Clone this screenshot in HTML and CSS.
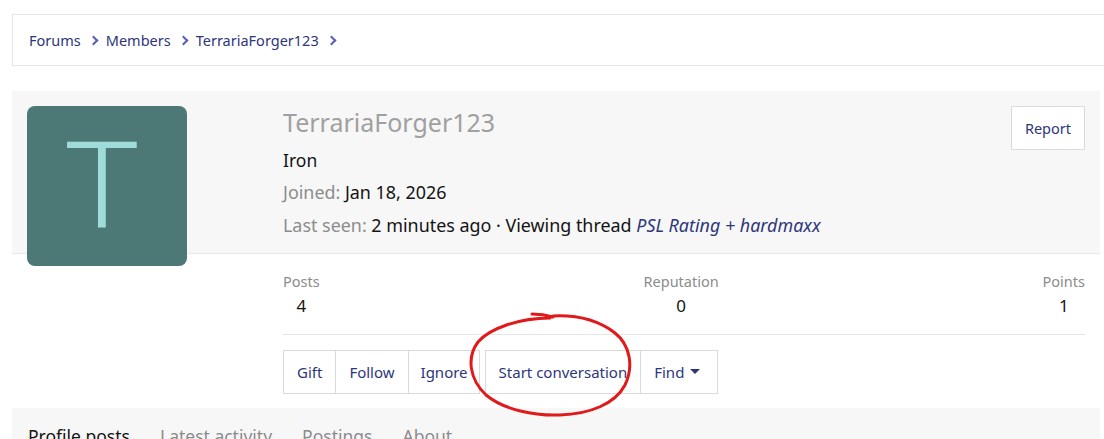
FILE: index.html
```html
<!DOCTYPE html>
<html lang="en">
<head>
<meta charset="utf-8">
<title>TerrariaForger123 | Members</title>
<link rel="stylesheet" href="styles.css">
</head>
<body>
<div class="page">
  <nav class="crumbs">
    <a class="crumb" href="#">Forums</a><span class="chev"></span>
    <a class="crumb" href="#">Members</a><span class="chev"></span>
    <a class="crumb" href="#">TerrariaForger123</a><span class="chev"></span>
  </nav>

  <section class="profile">
    <div class="head">
      <div class="avatar-col">
        <div class="avatar"><span class="letter">T</span></div>
      </div>
      <div class="info">
        <h1 class="name">TerrariaForger123</h1>
        <div class="title">Iron</div>
        <div class="line"><span class="muted">Joined:</span> Jan 18, 2026</div>
        <div class="line"><span class="muted">Last seen:</span> 2 minutes ago · Viewing thread <a class="thread" href="#">PSL Rating + hardmaxx</a></div>
      </div>
      <div class="report-col">
        <a class="btn report" href="#">Report</a>
      </div>
    </div>

    <div class="body">
      <div class="stats">
        <dl class="stat left"><dt>Posts</dt><dd>4</dd></dl>
        <dl class="stat"><dt>Reputation</dt><dd>0</dd></dl>
        <dl class="stat right"><dt>Points</dt><dd>1</dd></dl>
      </div>
      <div class="actions">
        <div class="group">
          <a class="btn" href="#">Gift</a>
          <a class="btn" href="#">Follow</a>
          <a class="btn ignore" href="#">Ignore</a>
        </div>
        <div class="group">
          <a class="btn" href="#">Start conversation</a>
          <a class="btn find" href="#">Find <span class="caret"></span></a>
        </div>
      </div>
    </div>

    <div class="tabs">
      <a class="tab active" href="#">Profile posts</a>
      <a class="tab" href="#">Latest activity</a>
      <a class="tab" href="#">Postings</a>
      <a class="tab" href="#">About</a>
    </div>

    <svg class="scribble" width="180" height="120" viewBox="460 305 180 120" aria-hidden="true">
      <path d="M532 314 Q543 314 553 317" />
      <path d="M550 318 C520 318 490 328 478 342 C466 358 470 380 486 395 C504 410 535 416 560 415 C590 414 615 404 625 385 C634 366 630 345 615 333 C598 320 575 315 553 316" />
    </svg>
  </section>
</div>
</body>
</html>
```

FILE: styles.css
```css
* { box-sizing: border-box; }

html, body {
  margin: 0;
  padding: 0;
  background: #fff;
  overflow: hidden;
}

body {
  font-family: "Noto Sans", "Open Sans", sans-serif;
  color: #141414;
}

a { text-decoration: none; color: #2e367a; }

.page {
  margin-left: 12px;
  width: 1088px;
  padding-top: 14px;
}

/* breadcrumbs */
.crumbs {
  display: flex;
  align-items: center;
  height: 52px;
  margin-right: -30px;
  padding-left: 16px;
  border: 1px solid #e6e6e6;
  font-size: 14.5px;
}

.crumb { color: #2e367a; }

.chev {
  width: 7px;
  height: 7px;
  margin: 0 9px 0 9px;
  border-top: 2.5px solid #5a5fb5;
  border-right: 2.5px solid #5a5fb5;
  transform: rotate(45deg);
}

/* profile */
.profile {
  position: relative;
  margin-top: 25px;
}

.head {
  display: flex;
  background: #f7f7f7;
  border-bottom: 1px solid #e8e8e8;
  height: 163px;
  padding: 15px 15px 0 15px;
}

.avatar-col {
  width: 256px;
  flex: none;
}

.avatar {
  display: flex;
  align-items: center;
  justify-content: center;
  width: 160px;
  height: 160px;
  border-radius: 8px;
  background: #4c7876;
  color: #9fdcd9;
  position: relative;
  z-index: 1;
}

.letter {
  font-family: "Noto Sans", sans-serif;
  font-weight: 300;
  font-size: 120px;
  line-height: 1;
  display: block;
  transform: translate(-5px, -5px) scaleX(1.12);
}

.info {
  flex: 1;
}

.name {
  margin: 0;
  font-weight: 400;
  font-size: 25px;
  line-height: 32px;
  color: #a0a0a0;
}

.title {
  font-size: 17.5px;
  line-height: 22px;
  margin-top: 11px;
}

.line {
  font-size: 17.9px;
  line-height: 22px;
  margin-top: 10px;
}

.line + .line { margin-top: 11px; }

.muted { color: #8c8c8c; }

.thread { font-style: italic; color: #2e367a; }

.report-col { flex: none; }

.btn {
  display: inline-flex;
  align-items: center;
  height: 44px;
  padding: 0 13px;
  background: #fff;
  border: 1px solid #dadada;
  font-size: 15px;
  color: #2e367a;
  white-space: nowrap;
}

.report { padding: 0 13px; font-size: 14.5px; }

.ignore { padding: 0 11px 0 12px; }

.find { padding: 0 17px 0 13px; }

/* body */
.body {
  padding: 0 15px 14px 271px;
}

.stats {
  display: flex;
  justify-content: space-between;
  border-bottom: 1px solid #e6e6e6;
  padding-top: 17px;
  height: 81px;
}

.stat {
  margin: 0;
  text-align: center;
}

.stat dt {
  font-size: 14.5px;
  line-height: 20px;
  color: #8c8c8c;
}

.stat dd {
  margin: 4px 0 0;
  font-size: 17px;
  line-height: 22px;
  color: #141414;
}

.actions {
  display: flex;
  gap: 5px;
  margin-top: 15px;
}

.group { display: flex; }

.group .btn + .btn { border-left: none; }

.caret {
  display: inline-block;
  margin-left: 6px;
  width: 0;
  height: 0;
  border-left: 5px solid transparent;
  border-right: 5px solid transparent;
  border-top: 5px solid #2e367a;
  position: relative;
  top: -1px;
}

/* tabs */
.tabs {
  display: flex;
  gap: 30px;
  background: #f7f7f7;
  padding: 16px 16px 12px;
  font-size: 17.5px;
}

.tab { color: #8c8c8c; }
.tab.active { color: #141414; }

/* hand-drawn annotation */
.scribble {
  position: absolute;
  left: 448px;
  top: 214px;
  fill: none;
  stroke: #e0191b;
  stroke-width: 3;
  stroke-linecap: round;
  stroke-linejoin: round;
  overflow: visible;
}
```
